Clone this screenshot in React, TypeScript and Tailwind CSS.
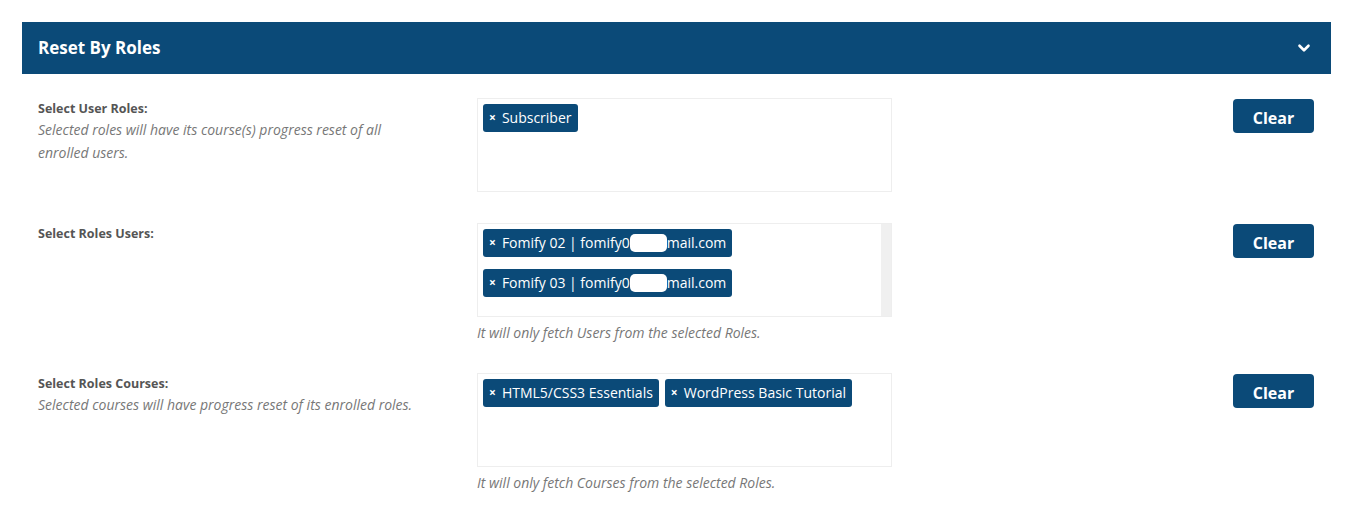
import { ChevronDown } from 'lucide-react'
import type { ReactNode } from 'react'

const FONT = "font-['Open_Sans','Noto_Sans',sans-serif]"

function Tag({ children }: { children: ReactNode }) {
  return (
    <span className="inline-flex items-center h-[28px] px-[6px] rounded-[3px] bg-[#0b4a78] text-white text-[14px] leading-none whitespace-nowrap">
      <span className="text-[12px] font-bold mr-[6px]">×</span>
      {children}
    </span>
  )
}

function Email({ name, prefix }: { name: string; prefix: string }) {
  return (
    <>
      {name} | {prefix}
      <span className="inline-block w-[37px] h-[18px] rounded-[5px] bg-white" />
      mail.com
    </>
  )
}

function ClearButton() {
  return (
    <button className="w-[81px] h-[34px] pt-[3px] rounded-[4px] bg-[#0b4a78] text-white text-[16px] font-bold">
      Clear
    </button>
  )
}

function Row({
  label,
  desc,
  help,
  tags,
  scroll,
  oneLine,
}: {
  label: string
  desc?: string
  help?: string
  tags: ReactNode
  scroll?: boolean
  oneLine?: boolean
}) {
  return (
    <div className="grid grid-cols-[439px_415px_1fr]">
      <div className="pt-[1px]">
        <div className="text-[12.5px] font-bold text-[#555] leading-[19px]">{label}</div>
        {desc && (
          <div
            className={
              oneLine
                ? 'text-[14px] italic text-[#777] leading-[23px] whitespace-nowrap'
                : 'text-[14px] italic text-[#777] leading-[23px] max-w-[370px]'
            }
          >
            {desc}
          </div>
        )}
      </div>
      <div>
        <div className="flex h-[94px] border border-[#eeeeee] bg-white">
          <div className="flex-1 flex flex-wrap content-start gap-x-[6px] gap-y-[12px] px-[5px] py-[5px]">
            {tags}
          </div>
          {scroll && <div className="w-[10px] bg-[#f0f0f0]" />}
        </div>
        {help && (
          <div className="mt-[7px] text-[14px] italic text-[#777] leading-[18px]">{help}</div>
        )}
      </div>
      <div className="flex justify-end pr-[17px] pt-[1px]">
        <ClearButton />
      </div>
    </div>
  )
}

export default function App() {
  return (
    <div className={`${FONT} bg-white w-[1359px] h-[511px] pt-[22px] px-[22px]`}>
      <div className="w-[1309px]">
        <div className="flex items-center justify-between h-[52px] pl-[16px] pr-[18px] bg-[#0b4a78]">
          <span className="text-white text-[17px] font-bold">Reset By Roles</span>
          <ChevronDown className="text-white" size={18} strokeWidth={3.5} />
        </div>
        <div className="pl-[16px] pt-[24px] flex flex-col gap-[31px]">
          <Row
            label="Select User Roles:"
            desc="Selected roles will have its course(s) progress reset of all enrolled users."
            tags={<Tag>Subscriber</Tag>}
          />
          <Row
            label="Select Roles Users:"
            help="It will only fetch Users from the selected Roles."
            scroll
            tags={
              <>
                <Tag>
                  <Email name="Fomify 02" prefix="fomify0" />
                </Tag>
                <Tag>
                  <Email name="Fomify 03" prefix="fomify0" />
                </Tag>
              </>
            }
          />
          <Row
            label="Select Roles Courses:"
            desc="Selected courses will have progress reset of its enrolled roles."
            help="It will only fetch Courses from the selected Roles."
            oneLine
            tags={
              <>
                <Tag>HTML5/CSS3 Essentials</Tag>
                <Tag>WordPress Basic Tutorial</Tag>
              </>
            }
          />
        </div>
      </div>
    </div>
  )
}
